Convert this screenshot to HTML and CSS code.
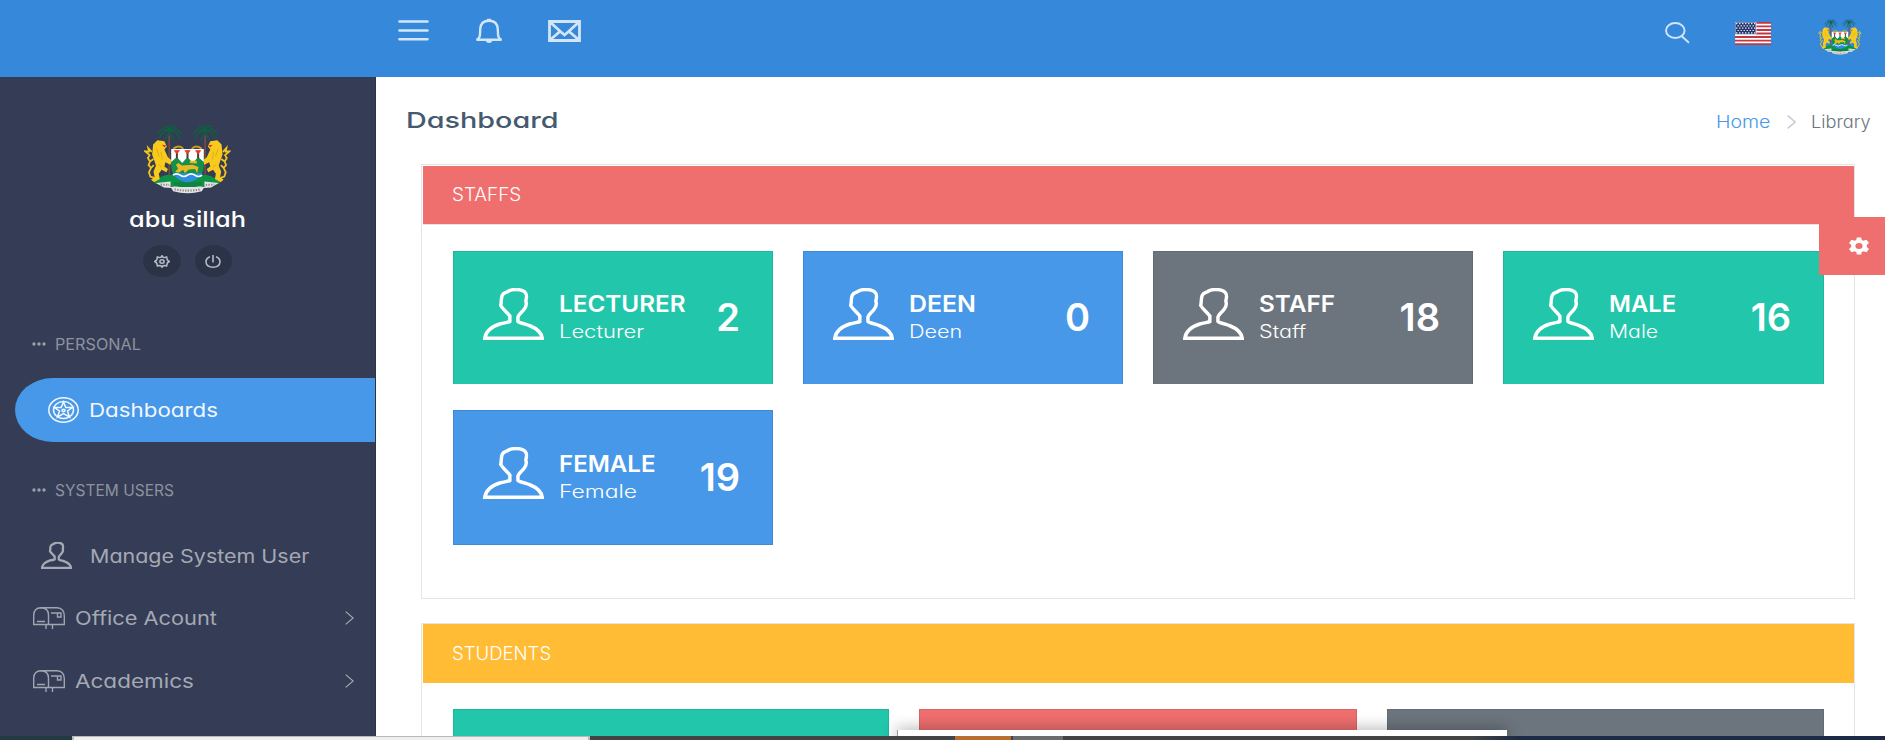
FILE: index.html
```html
<!DOCTYPE html>
<html lang="en">
<head>
<meta charset="utf-8">
<title>Dashboard</title>
<link rel="stylesheet" href="styles.css">
</head>
<body>
<svg class="defs" aria-hidden="true">
  <defs>
    <symbol id="person" viewBox="0 0 62 52" preserveAspectRatio="none">
      <path d="M1.800 50.200C3 43 9 38.500 17 36C22 34.500 26 34.500 27.300 33.500V28C24 24 20 21 18 17.500C19 14 18 11 19.500 7.500C21 4 24 5 26 3C30 1 37 1.200 41 3C46 5.500 44 10 43.500 13C45 17 43.500 19 42 21C39 25 36.500 26 35.500 29V33.500C36 35 41 35 47 37.500C56 41 59.500 45 60.200 50.200Z"/>
    </symbol>
    <symbol id="mailbox" viewBox="0 0 32 22" preserveAspectRatio="none">
      <path d="M8 .7H24Q31.300 1 31.300 9V17.500H.7V8Q.9 1 8 .7Q15.500 1 15.500 8V17.500M4 14.500H12M18 6H28V10H24.500V6M13 18V22M19.500 18V22"/>
    </symbol>
    <symbol id="chev" viewBox="0 0 9 14" preserveAspectRatio="none"><path d="M.7 .6L8.200 7L.7 13.400"/></symbol>
    <symbol id="palm" viewBox="0 0 50 40">
      <path d="M25 14C12 5 7 12 2 19M25 14C14 10 8 22 6 27M25 14C22 2 15 5 12 4M25 14C28 2 33 5 38 4M25 14C38 5 43 12 48 19M25 14C36 10 42 22 44 27M25 14L16 30M25 14L33 30M25 14V2" fill="none" stroke="#106040" stroke-width="2.700"/>
    </symbol>
    <symbol id="lion" viewBox="0 0 85 120">
      <path d="M26 14L38 2L58 5L65 20L58 28L68 50L80 60L75 71L61 64L58 76L68 83L64 92L50 85L42 96L45 111L29 120L20 113L30 105L27 90L34 74L29 58L23 42Z" fill="#f8ca1c"/>
      <path d="M29 108L18 104L14 92L20 80L13 72L17 62L11 52L16 44L3 33L14 34L12 24L22 35M17 62L27 55M20 80L28 72" fill="none" stroke="#f5c51c" stroke-width="5"/>
      <path d="M36 26L43 48M48 34L52 56M41 70L50 78" stroke="#c8931a" stroke-width="1.500" fill="none"/>
      <path d="M51 15L64 17L58 22Z" fill="#d3272e"/>
    </symbol>
    <symbol id="emblem" viewBox="42 32 262 208" preserveAspectRatio="none">
      <path d="M118 66V185M226 66V185" stroke="#7a4a42" stroke-width="5"/>
      <use href="#palm" x="78" y="32" width="82" height="64"/>
      <use href="#palm" x="185" y="32" width="82" height="64"/>
      <path d="M72 207Q95 180 125 183H220Q250 183 272 207L245 217H98Z" fill="#0d9346"/>
      <path d="M130 105Q150 92 160 106M186 106Q196 92 216 105" stroke="#c99a1c" stroke-width="6" fill="none"/>
      <use href="#lion" x="42" y="78" width="90" height="127"/>
      <use href="#lion" transform="translate(345 0) scale(-1 1)" x="42" y="78" width="90" height="127"/>
      <path d="M124 106H222V158Q220 196 173 209Q126 196 124 158Z" fill="#15904a"/>
      <path d="M124 106H222V145L205 130L189 148L173 130L157 148L141 130L124 145Z" fill="#fff"/>
      <path d="M141 117V134M173 117V134M205 117V134" stroke="#4a3b36" stroke-width="6"/>
      <path d="M133 111H149L141 121ZM165 111H181L173 121ZM197 111H213L205 121Z" fill="#e33b24" stroke="#e33b24" stroke-width="2"/>
      <path d="M138 153L146 148L156 155L188 153L206 160L202 178L196 166L177 167L165 178L160 168L147 177L136 174L145 164ZM180 148V141H201V149Z" fill="#e8b920"/>
      <path d="M128 178H218Q208 197 173 207Q138 197 128 178" fill="#2f8ddd"/>
      <path d="M129 184Q140 176 151 184T173 184T195 184T217 184" fill="none" stroke="#fff" stroke-width="5"/>
      <path d="M78 207L122 203V219L140 216Q173 221 206 216L224 219V203L267 207L244 221L222 222L216 232Q173 243 130 232L124 222L102 221Z" fill="#e4e3e4"/>
      <path d="M130 205H216L212 217Q173 222 134 217Z" fill="#0d8440"/>
      <path d="M92 212L118 213M228 213L254 212M134 226Q173 234 212 226" stroke="#88888c" stroke-width="6" stroke-dasharray="4 4" fill="none"/>
    </symbol>
  </defs>
</svg>

<header class="topbar">
  <svg class="ic-menu" viewBox="0 0 31 21"><path d="M1.500 1.500H29.500M1.500 10.500H29.500M1.500 19.300H29.500"/></svg>
  <svg class="ic-bell" viewBox="0 0 28 25"><path d="M1.500 21.800C5.500 20 5 17 5.200 11C5.600 5.500 9 2.800 14 2.800S22.400 5.500 22.800 11C23 17 22.500 20 26.500 21.800ZM12 2H16"/><path class="fill" d="M10.500 22H17.500Q17 25 14 25T10.500 22"/></svg>
  <svg class="ic-mail" viewBox="0 0 33 22"><path d="M1.500 1.500H31.500V20.500H1.500ZM2 2L13 12L16.500 15L20 12L31 2M2 20L12.500 11M31 20L20.500 11"/></svg>
  <span class="grow"></span>
  <svg class="ic-search" viewBox="0 0 25 22"><ellipse cx="10.300" cy="8.500" rx="9.300" ry="7.500"/><path d="M16.500 14L24 20.800"/></svg>
  <svg class="flag" viewBox="0 0 36 23" preserveAspectRatio="none">
    <path fill="#fff" d="M0 0H36V23H0Z"/>
    <path stroke="#c4373f" stroke-width="1.800" d="M0 .9H36M0 4.400H36M0 8H36M0 11.500H36M0 15H36M0 18.600H36M0 22.100H36"/>
    <path fill="#26356b" d="M0 0H21V12.400H0Z"/>
    <path stroke="#e9edf6" stroke-width="1.200" stroke-dasharray="1.400 1.600" d="M1 1.600H20M2.500 3.900H20M1 6.200H20M2.500 8.500H20M1 10.800H20"/>
  </svg>
  <svg class="avatar"><use href="#emblem"/></svg>
</header>

<div class="shell">
  <aside class="sidebar">
    <svg class="crest"><use href="#emblem"/></svg>
    <div class="user"><span class="t x-user">abu sillah</span></div>
    <div class="actions">
      <a class="round"><svg viewBox="0 0 16 13" preserveAspectRatio="none"><path d="M8 .8L9 2.300L11 2.500L12.600 2L13 3.700L13.500 5.200L15.200 6.500L13.500 7.800L13 9.300L12.600 11L11 10.500L9 10.700L8 12.200L7 10.700L5 10.500L3.400 11L3 9.300L2.500 7.800L.8 6.500L2.500 5.200L3 3.700L3.400 2L5 2.500L7 2.300Z"/><ellipse cx="8" cy="6.500" rx="2.100" ry="1.700"/></svg></a>
      <a class="round"><svg viewBox="0 0 16 13" preserveAspectRatio="none"><path d="M5 1.800Q1 3 1 7Q1.500 12.200 8 12.200T15 7Q15 3 11 1.800M8 0V7.500"/></svg></a>
    </div>
    <div class="cap"><svg class="dots" viewBox="0 0 14 4"><circle cx="2" cy="2" r="1.700"/><circle cx="7" cy="2" r="1.700"/><circle cx="12" cy="2" r="1.700"/></svg><span class="t x-personal">PERSONAL</span></div>
    <a class="item active"><svg class="wheel" viewBox="0 0 31 26" preserveAspectRatio="none"><ellipse cx="15.500" cy="13" rx="14.700" ry="12.200"/><ellipse cx="15.500" cy="13" rx="10" ry="8.500"/><path d="M15.500 5L17.800 10.500H24.500L19.500 14L21.500 20L15.500 16.500L9.500 20L11.500 14L6.500 10.500H13.200Z"/><ellipse cx="15.500" cy="13.500" rx="1.500" ry="1.200"/></svg><span class="t x-dash">Dashboards</span></a>
    <div class="cap second"><svg class="dots" viewBox="0 0 14 4"><circle cx="2" cy="2" r="1.700"/><circle cx="7" cy="2" r="1.700"/><circle cx="12" cy="2" r="1.700"/></svg><span class="t x-sys">SYSTEM USERS</span></div>
    <a class="item manage"><svg class="man"><use href="#person"/></svg><span class="t x-manage">Manage System User</span></a>
    <a class="item group"><svg class="box"><use href="#mailbox"/></svg><span class="t x-office">Office Acount</span><svg class="chev"><use href="#chev"/></svg></a>
    <a class="item group"><svg class="box"><use href="#mailbox"/></svg><span class="t x-acad">Academics</span><svg class="chev"><use href="#chev"/></svg></a>
  </aside>

  <main class="main">
    <div class="titlebar">
      <h1><span class="t x-title">Dashboard</span></h1>
      <nav class="crumbs"><a class="home"><span class="t x-home">Home</span></a><svg class="sep"><use href="#chev"/></svg><span class="lib"><span class="t x-lib">Library</span></span></nav>
    </div>

    <section class="panel staffs">
      <div class="phead red"><span class="t x-staffs">STAFFS</span></div>
      <div class="tiles">
        <div class="tile green"><svg class="pic"><use href="#person"/></svg><div class="lbl"><b class="t x-b1">LECTURER</b><span class="t x-l1">Lecturer</span></div><strong class="num">2</strong></div>
        <div class="tile blue"><svg class="pic"><use href="#person"/></svg><div class="lbl"><b class="t x-b2">DEEN</b><span class="t x-l2">Deen</span></div><strong class="num">0</strong></div>
        <div class="tile grey"><svg class="pic"><use href="#person"/></svg><div class="lbl"><b class="t x-b3">STAFF</b><span class="t x-l3">Staff</span></div><strong class="num">18</strong></div>
        <div class="tile green"><svg class="pic"><use href="#person"/></svg><div class="lbl"><b class="t x-b4">MALE</b><span class="t x-l4">Male</span></div><strong class="num">16</strong></div>
        <div class="tile blue last"><svg class="pic"><use href="#person"/></svg><div class="lbl"><b class="t x-b5">FEMALE</b><span class="t x-l5">Female</span></div><strong class="num">19</strong></div>
      </div>
    </section>

    <section class="panel students">
      <div class="phead yellow"><span class="t x-students">STUDENTS</span></div>
      <div class="tiles three">
        <div class="tile green"></div>
        <div class="tile redtile"></div>
        <div class="tile grey"></div>
      </div>
    </section>
  </main>
</div>

<a class="settings"><svg viewBox="0 0 22 18" preserveAspectRatio="none"><path fill-rule="evenodd" d="M8.800 .5H13.200L13.700 3L15.500 3.800L18.500 2.800L21 6L18.800 8V10L21 12L18.500 15.200L15.500 14.200L13.700 15L13.200 17.500H8.800L8.300 15L6.500 14.200L3.500 15.200L1 12L3.200 10V8L1 6L3.500 2.800L6.500 3.800L8.300 3ZM11 6A3.600 3 0 1 0 11 12A3.600 3 0 1 0 11 6Z"/></svg></a>

<div class="preview"></div>
<div class="taskbar"><i class="tb-a"></i><i class="tb-b"></i><i class="tb-c"></i><i class="tb-d"></i><i class="tb-e"></i><i class="tb-f"></i><i class="tb-g"></i></div>
</body>
</html>
```
FILE: styles.css
```css
* { box-sizing: border-box; }
html, body { height: 740px; overflow: hidden; }
body { margin: 0; background: #fff; font-family: Inter, "Open Sans", sans-serif; font-feature-settings: "cv11"; }
svg { display: block; flex: none; fill: none; }
.defs { position: absolute; width: 0; height: 0; }
.t { display: inline-block; white-space: nowrap; transform-origin: 0 50%; }
.grow { flex: 1; }

.topbar { height: 77px; background: #3688da; display: flex; align-items: flex-start; padding: 0 23px 0 398px; stroke: #d3e5f8; }
.ic-menu { width: 31px; height: 21px; margin-top: 20px; stroke-width: 2.600; stroke-linecap: round; }
.ic-bell { width: 28px; height: 25px; margin: 18px 0 0 46px; stroke-width: 2.400; }
.ic-bell .fill { fill: #d3e5f8; stroke: none; }
.ic-mail { width: 33px; height: 22px; margin: 20px 0 0 45px; stroke-width: 2.800; }
.ic-search { width: 25px; height: 22px; margin: 22px 45px 0 0; stroke-width: 1.900; }
.flag { width: 36px; height: 23px; margin: 22px 47px 0 0; }
.avatar { width: 44px; height: 36px; margin-top: 19px; stroke: none; }

.shell { display: flex; height: 663px; overflow: hidden; }
.sidebar { width: 376px; flex: none; background: #343d55; border-right: 1px solid #2b3348; color: #a5a9b4; }
.crest { width: 87px; height: 70px; margin: 47px 0 0 144px; }
.user { height: 30px; line-height: 30px; margin-top: 11px; padding-left: 129px; color: #fff; font-size: 21px; font-weight: 500; }
.actions { display: flex; gap: 14px; margin-top: 10px; padding-left: 143px; }
.round { width: 37.500px; height: 32px; border-radius: 50%; background: #2b3347; display: grid; place-items: center; }
.round svg { width: 16px; height: 13px; stroke: #b3b9c6; stroke-width: 1.600; }
.cap { display: flex; align-items: center; height: 30px; margin-top: 52px; padding-left: 32px; font-size: 16px; color: #8e929f; }
.cap.second { margin-top: 33px; }
.dots { width: 14px; height: 4px; margin-right: 9px; fill: #9b9fab; }
.item { display: flex; align-items: center; font-size: 18.500px; }
.active { height: 64px; margin: 19px 0 0 15px; padding-left: 33px; background: #4798e8; border-radius: 38px 0 0 38px / 32px 0 0 32px; color: #f2f7fd; font-size: 19px; }
.wheel { width: 31px; height: 26px; margin-right: 10px; stroke: #f2f7fd; stroke-width: 1.500; }
.manage { height: 60px; margin-top: 21px; padding-left: 41px; }
.man { width: 31px; height: 27px; margin: -2px 18px 0 0; stroke: #a5a9b4; stroke-width: 4.600; }
.group { height: 63px; padding: 0 20px 0 33px; }
.group .t { flex: 1; }
.box { width: 32px; height: 22px; margin-right: 10px; stroke: #a0a5b1; stroke-width: 1.400; }
.chev { width: 9px; height: 14px; margin-right: 1px; stroke: #a5a9b4; stroke-width: 1.200; }

.main { flex: 1; min-width: 0; padding: 0 30px 0 45px; }
.titlebar { height: 87px; margin-right: -30px; display: flex; justify-content: space-between; }
h1 { margin: 0 0 0 -15px; font-size: 22px; font-weight: 500; line-height: 87px; color: #455a6e; }
.crumbs { display: flex; align-items: center; width: 169px; height: 89px; font-size: 17px; color: #6c757d; font-weight: 300; }
.home { width: 71px; color: #4798e8; }
.sep { width: 9px; height: 14px; margin-right: 15px; stroke: #c3ccd6; stroke-width: 1.500; }

.panel { border: 1px solid #e3e4e6; }
.staffs { height: 435px; padding-top: 1px; }
.students { height: 200px; margin-top: 24px; }
.phead { height: 58px; line-height: 58px; margin-left: 1px; padding-left: 29px; color: #fff; font-size: 18px; font-weight: 300; }
.red { background: #ef6e6e; box-shadow: 0 1px #e6e3e4; }
.yellow { background: #ffbc34; height: 59px; line-height: 59px; }
.tiles { display: grid; grid-template-columns: repeat(3, 320px) 321px; grid-template-rows: 133px 135px; gap: 26px 30px; padding: 27px 0 0 31px; }
.three { grid-template-columns: 436px 438px 437px; grid-template-rows: 100px; padding-top: 26px; }
.tile { display: flex; padding: 36px 32px 0 29px; color: #fff; border: 1px solid; border-bottom: 0; }
.green { background: #22c6ab; border-color: #20b59d; }
.blue { background: #4798e8; border-color: #3f8ad8; }
.grey { background: #6c757d; border-color: #626d73; }
.redtile { background: #ef6e6e; border-color: #d9646a; }
.tile.last { border-bottom: 1px solid #3f8ad8; }
.pic { width: 61px; height: 52px; stroke: #fff; stroke-width: 3.500; margin-right: 15px; }
.lbl { flex: 1; display: flex; flex-direction: column; align-items: flex-start; }
.lbl b { font-size: 23px; font-weight: 600; line-height: 30px; margin-top: 1px; }
.lbl span { font-size: 18px; font-weight: 300; line-height: 25px; }
.num { font-size: 38px; font-weight: 600; line-height: 58px; }
.last .lbl, .last .num { padding-top: 1px; }

.x-user { transform: scaleX(1.205); }
.x-personal { transform: scaleX(1.014); }
.x-dash { transform: scaleX(1.175); }
.x-sys { transform: scaleX(.97); }
.x-manage { transform: scaleX(1.16); }
.x-office { transform: scaleX(1.178); }
.x-acad { transform: scaleX(1.216); }
.x-title { transform: scaleX(1.307); }
.x-home { transform: scaleX(1.15); }
.x-lib { transform: scaleX(1.07); }
.x-staffs { transform: scaleX(1.05); }
.x-students { transform: scaleX(1.03); }
.x-b1 { transform: scaleX(1.055); }
.x-b2 { transform: scaleX(1.082); }
.x-b3 { transform: scaleX(1.057); }
.x-b4 { transform: scaleX(1.033); }
.x-b5 { transform: scaleX(1.045); }
.x-l1 { transform: scaleX(1.22); }
.x-l2 { transform: scaleX(1.2); }
.x-l3 { transform: scaleX(1.2); }
.x-l4 { transform: scaleX(1.18); }
.x-l5 { transform: scaleX(1.27); }

.settings { position: absolute; right: 0; top: 217px; width: 66px; height: 58px; background: #ef6e6e; }
.settings svg { width: 22px; height: 18px; margin: 20px 0 0 29px; fill: #fff; }
.preview { position: absolute; left: 897px; top: 730px; width: 610px; height: 10px; background: #fff; border-left: 1px solid #999; box-shadow: 0 0 16px rgba(0, 0, 0, .4); clip-path: inset(-20px -20px 0 -20px); }
.taskbar { position: absolute; left: 0; top: 736px; width: 1885px; height: 4px; display: flex; background: #444; }
.tb-a { width: 72px; background: #233a42; }
.tb-b { width: 518px; background: #efefef; border: solid #b9b9b9; border-width: 1px 2px 0; }
.tb-c { width: 365px; }
.tb-d { width: 56px; background: #b96e30; }
.tb-e { width: 50px; margin-left: 2px; background: #6c6c6c; }
.tb-f { width: 407px; }
.tb-g { flex: 1; background: linear-gradient(90deg, #444, #1c2a46 50px); }
```
